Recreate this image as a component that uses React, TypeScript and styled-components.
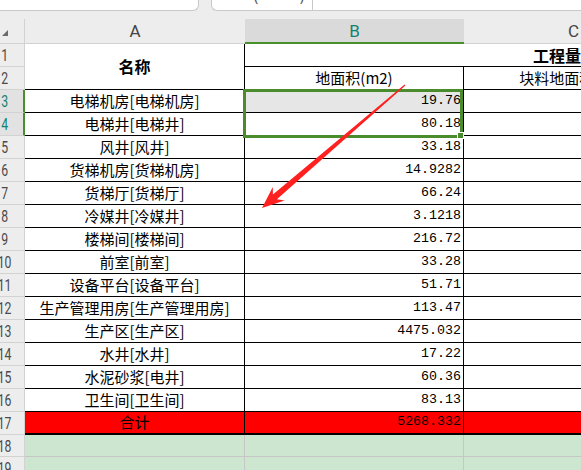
import React from "react";
import styled, { createGlobalStyle, css } from "styled-components";

const GlobalStyle = createGlobalStyle`
  html, body { margin: 0; padding: 0; width: 581px; height: 470px; overflow: hidden; background: #ededed; }
  #root { width: 581px; height: 470px; overflow: hidden; }
`;

const Page = styled.div`
  position: relative;
  width: 581px;
  height: 470px;
  overflow: hidden;
  background: #ededed;
  display: flex;
  flex-direction: column;
`;

const Toolbar = styled.div`
  height: 19px;
  flex-shrink: 0;
  display: flex;
  gap: 12px;
  align-items: flex-start;
`;

const NameBox = styled.div`
  width: 199px;
  height: 11px;
  box-sizing: border-box;
  background: #fff;
  border: 1px solid #c9c9c9;
  border-top: none;
  border-left: none;
  border-radius: 0 0 6px 0;
`;

const FormulaBox = styled.div`
  flex: 1;
  height: 11px;
  box-sizing: border-box;
  background: #fff;
  border: 1px solid #c9c9c9;
  border-top: none;
  border-right: none;
  border-radius: 0 0 0 6px;
  display: flex;
  align-items: stretch;
  overflow: hidden;
`;

const FxButtons = styled.div`
  width: 101px;
  box-sizing: border-box;
  padding-left: 42px;
  border-right: 1px solid #c9c9c9;
  overflow: hidden;
`;

const FxGlyphs = styled.span`
  display: block;
  margin-top: -11px;
  font: 14px "Noto Sans", sans-serif;
  color: #555;
  line-height: 14px;
  letter-spacing: 7px;
  white-space: nowrap;
`;

const Sheet = styled.div`
  display: grid;
  grid-template-columns: 25px 220px 219px 219px 187px;
  grid-template-rows: 25px repeat(16, 23px) 23px 22px 23px;
  font-family: "Noto Sans CJK SC", sans-serif;
  color: #000;
`;

const Corner = styled.div`
  box-sizing: border-box;
  border-bottom: 1px solid #d2d2d2;
  border-right: 1px solid #d2d2d2;
  padding: 11px 0 0 2px;
`;

const CornerMark = styled.div`
  width: 0;
  height: 0;
  border-left: 6px solid transparent;
  border-bottom: 6px solid #6a6a6a;
`;

const ColHead = styled.div<{ $active?: boolean }>`
  box-sizing: border-box;
  display: flex;
  align-items: center;
  justify-content: center;
  font: 17px "Roboto", "Noto Sans", sans-serif;
  color: #444;
  border-bottom: 1px solid #d2d2d2;
  ${(p) =>
    p.$active &&
    css`
      background: #dadada;
      color: #138170;
      border-bottom: 2px solid #47902c;
    `}
`;

const RowHead = styled.div<{ $active?: boolean }>`
  box-sizing: border-box;
  display: flex;
  align-items: center;
  justify-content: center;
  padding-right: 14px;
  overflow: hidden;
  color: #4a4a4a;
  border-bottom: 1px solid #d2d2d2;
  border-right: 1px solid #d2d2d2;
  ${(p) =>
    p.$active &&
    css`
      background: #e2e2e2;
      color: #138170;
      border-right: 2px solid #47902c;
    `}
`;

const RowNum = styled.span`
  display: inline-block;
  font: 17px "Roboto", "Noto Sans", sans-serif;
  transform: scaleX(0.72);
  white-space: nowrap;
`;

type Kind = "text" | "num" | "title" | "green";

const Cell = styled.div<{ $kind?: Kind; $fill?: string; $thick?: boolean; $span?: number; $rows?: number }>`
  position: relative;
  box-sizing: border-box;
  display: flex;
  align-items: flex-end;
  justify-content: center;
  white-space: nowrap;
  border-right: 1px solid #000;
  border-bottom: ${(p) => (p.$thick ? "2px" : "1px")} solid #000;
  background: ${(p) => p.$fill || "#fff"};
  font-size: 15px;
  line-height: 16px;
  padding-bottom: 3px;
  ${(p) => p.$span && css`grid-column: span ${p.$span};`}
  ${(p) => p.$rows && css`grid-row: span ${p.$rows};`}
  ${(p) =>
    p.$kind === "num" &&
    css`
      justify-content: flex-end;
      padding-right: 2px;
      font-family: "Liberation Mono", "DejaVu Sans Mono", monospace;
      font-size: 13.3px;
    `}
  ${(p) =>
    p.$kind === "title" &&
    css`
      font-weight: 700;
      font-size: 16px;
    `}
  ${(p) =>
    p.$kind === "green" &&
    css`
      background: #cde6d0;
      border-right: 1px solid #c6c6c6;
      border-bottom: 1px solid #c6c6c6;
    `}
`;

const MergedTitle = styled(Cell)`
  align-items: center;
  padding-bottom: 1px;
`;

const SelectionFrame = styled.div`
  position: absolute;
  left: -2px;
  top: -1px;
  right: 0;
  height: 49px;
  box-sizing: border-box;
  border: 3px solid #4a8c2c;
  z-index: 2;
  pointer-events: none;
`;

const FillHandle = styled.div`
  position: absolute;
  right: -4px;
  bottom: -4px;
  width: 7px;
  height: 7px;
  box-sizing: border-box;
  background: #4a8c2c;
  border: 1px solid #fff;
`;

const ArrowLayer = styled.svg`
  position: absolute;
  left: 0;
  top: 0;
  width: 581px;
  height: 470px;
  pointer-events: none;
  z-index: 5;
`;

const rows: [string, string][] = [
  ["电梯机房[电梯机房]", "19.76"],
  ["电梯井[电梯井]", "80.18"],
  ["风井[风井]", "33.18"],
  ["货梯机房[货梯机房]", "14.9282"],
  ["货梯厅[货梯厅]", "66.24"],
  ["冷媒井[冷媒井]", "3.1218"],
  ["楼梯间[楼梯间]", "216.72"],
  ["前室[前室]", "33.28"],
  ["设备平台[设备平台]", "51.71"],
  ["生产管理用房[生产管理用房]", "113.47"],
  ["生产区[生产区]", "4475.032"],
  ["水井[水井]", "17.22"],
  ["水泥砂浆[电井]", "60.36"],
  ["卫生间[卫生间]", "83.13"],
];

export default function App() {
  return (
    <Page>
      <GlobalStyle />
      <Toolbar>
        <NameBox />
        <FormulaBox>
          <FxButtons>
            <FxGlyphs>(✓●)</FxGlyphs>
          </FxButtons>
        </FormulaBox>
      </Toolbar>
      <Sheet>
        <Corner>
          <CornerMark />
        </Corner>
        <ColHead>A</ColHead>
        <ColHead $active>B</ColHead>
        <ColHead>C</ColHead>
        <ColHead>D</ColHead>

        <RowHead>
          <RowNum>1</RowNum>
        </RowHead>
        <MergedTitle $kind="title" $rows={2}>名称</MergedTitle>
        <Cell $kind="title" $span={3}>工程量</Cell>

        <RowHead>
          <RowNum>2</RowNum>
        </RowHead>
        <Cell>地面积(m2)</Cell>
        <Cell>块料地面积(m2)</Cell>
        <Cell />

        {rows.map(([name, value], i) => {
          const n = i + 3;
          const active = n === 3 || n === 4;
          return (
            <React.Fragment key={n}>
              <RowHead $active={active}>
                <RowNum>{n}</RowNum>
              </RowHead>
              <Cell>{name}</Cell>
              <Cell $kind="num" $fill={n === 3 ? "#e6e6e6" : undefined}>
                {value}
                {n === 3 && (
                  <SelectionFrame>
                    <FillHandle />
                  </SelectionFrame>
                )}
              </Cell>
              <Cell />
              <Cell />
            </React.Fragment>
          );
        })}

        <RowHead>
          <RowNum>17</RowNum>
        </RowHead>
        <Cell $fill="#ff0000" $thick>合计</Cell>
        <Cell $kind="num" $fill="#ff0000" $thick>5268.332</Cell>
        <Cell $fill="#ff0000" $thick />
        <Cell $fill="#ff0000" $thick />

        {[18, 19].map((n) => (
          <React.Fragment key={n}>
            <RowHead>
              <RowNum>{n}</RowNum>
            </RowHead>
            <Cell $kind="green" />
            <Cell $kind="green" />
            <Cell $kind="green" />
            <Cell $kind="green" />
          </React.Fragment>
        ))}
      </Sheet>

      <ArrowLayer viewBox="0 0 581 470">
        <polygon
          points="405.4,85.6 276.9,199.2 284.6,200.5 262,208 272.8,186.9 272.9,194.6 404.6,84.4"
          fill="#ff2020"
        />
      </ArrowLayer>
    </Page>
  );
}
